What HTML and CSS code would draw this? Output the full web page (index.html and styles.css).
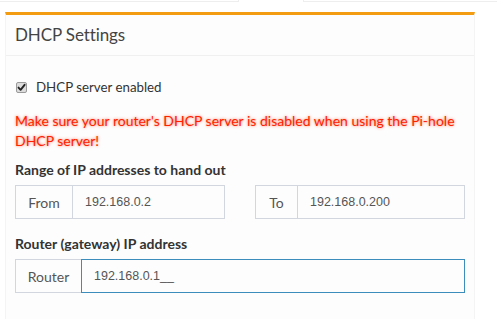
FILE: index.html
```html
<!DOCTYPE html>
<html>
<head>
<meta charset="utf-8">
<link rel="stylesheet" href="styles.css">
</head>
<body>
<div class="prev">
  <div class="prev-left"></div>
  <div class="prev-gap"></div>
  <div class="prev-right"></div>
</div>
<div class="box">
  <div class="box-header">
    <h3 class="box-title">DHCP Settings</h3>
  </div>
  <div class="box-body">
    <label class="check-row">
      <span class="chk"><svg width="9" height="9" viewBox="0 0 9 9"><path d="M1.5 4.6 L3.6 6.8 L7.6 1.8" fill="none" stroke="#222" stroke-width="1.9" stroke-linecap="round" stroke-linejoin="round"/></svg></span>
      <span>DHCP server enabled</span>
    </label>
    <p class="warn">Make sure your router's DHCP server is disabled when using the Pi-hole DHCP server!</p>
    <div class="field-label">Range of IP addresses to hand out</div>
    <div class="row">
      <div class="group">
        <span class="addon from">From</span>
        <span class="input">192.168.0.2</span>
      </div>
      <div class="group">
        <span class="addon to">To</span>
        <span class="input">192.168.0.200</span>
      </div>
    </div>
    <div class="field-label second">Router (gateway) IP address</div>
    <div class="group wide">
      <span class="addon router">Router</span>
      <span class="input focus">192.168.0.1__</span>
    </div>
  </div>
</div>
</body>
</html>
```
FILE: styles.css
```css
html, body {
  margin: 0;
  padding: 0;
  background: #ffffff;
  font-family: "Lato", "Noto Sans", sans-serif;
  color: #333;
}
.prev {
  display: flex;
  height: 2px;
}
.prev-left {
  width: 238px;
  border-bottom: 1px solid #eeeeee;
  border-right: 1px solid #eeeeee;
}
.prev-gap {
  width: 64px;
}
.prev-right {
  flex: 1;
  border-bottom: 1px solid #eeeeee;
  border-left: 1px solid #eeeeee;
}
.box {
  margin: 10px 0 0 5px;
  width: 470px;
  box-sizing: border-box;
  border-top: 3px solid #f39c12;
  border-left: 1px solid #f4f4f4;
  border-right: 1px solid #f4f4f4;
  background: #fdfdfd;
  height: 320px;
}
.box-header {
  height: 40px;
  border-bottom: 1px solid #f0f0f0;
  padding: 0 9px;
  display: flex;
  align-items: center;
}
.box-title {
  margin: 0 0 2px 0;
  font-size: 17px;
  letter-spacing: -0.1px;
  font-weight: 400;
  color: #444;
}
.box-body {
  padding: 21px 9px 0 9px;
}
.check-row {
  display: flex;
  align-items: center;
  height: 20px;
  font-size: 13.3px;
  color: #333;
}
.chk {
  display: flex;
  align-items: center;
  justify-content: center;
  width: 11px;
  height: 11px;
  margin: 0 9px 0 1px;
  box-sizing: border-box;
  border: 1px solid #9a9a9a;
  border-radius: 2px;
  background: #dcdcdc;
}
.warn {
  margin: 14px 0 0 0;
  font-size: 14px;
  line-height: 20px;
  color: #ff2200;
  text-shadow: 0 0 3px rgba(255, 50, 0, 0.7);
}
.field-label {
  margin-top: 9px;
  font-size: 14px;
  line-height: 20px;
  font-weight: 700;
  color: #333;
}
.field-label.second {
  margin-top: 15px;
}
.row {
  display: flex;
  gap: 30px;
  margin-top: 5px;
}
.group {
  display: flex;
  width: 210px;
  height: 34px;
  box-sizing: border-box;
}
.group.wide {
  width: 450px;
  margin-top: 5px;
}
.addon {
  display: flex;
  align-items: center;
  justify-content: center;
  border: 1px solid #d2d6de;
  border-right: none;
  font-size: 14px;
  color: #555;
  box-sizing: border-box;
}
.addon.from { width: 57px; }
.addon.to { width: 42px; }
.addon.router { width: 66px; }
.input {
  flex: 1;
  display: flex;
  align-items: center;
  border: 1px solid #d2d6de;
  padding-left: 12px;
  font-size: 12.5px;
  color: #555;
  font-family: "Liberation Sans", sans-serif;
}
.input.focus {
  border-color: #3c8dbc;
}
```
